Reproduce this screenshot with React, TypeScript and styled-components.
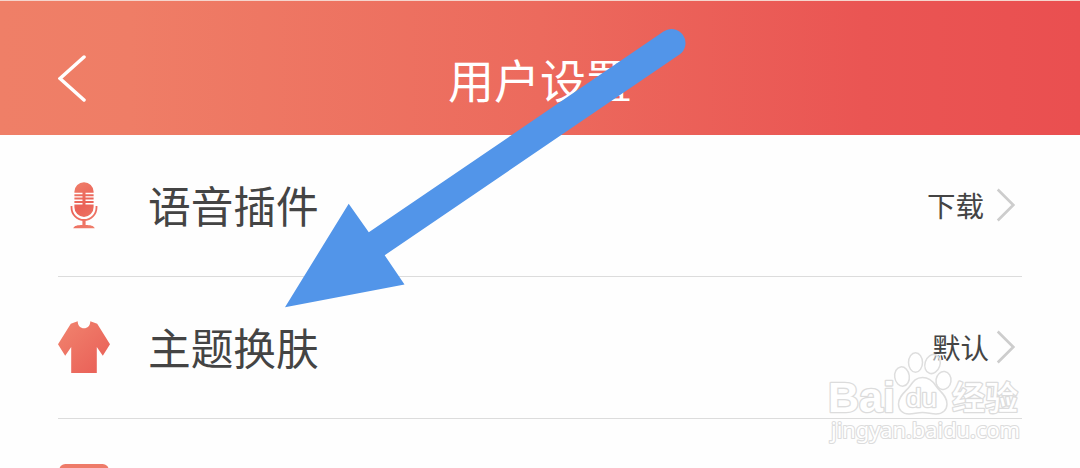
import React from 'react';
import styled, { createGlobalStyle } from 'styled-components';

const GlobalStyle = createGlobalStyle`
  body {
    margin: 0;
    overflow: hidden;
    background: #fefefe;
    font-family: 'Noto Sans CJK SC', 'Noto Sans', sans-serif;
  }
`;

const Screen = styled.div`
  position: relative;
  width: 1080px;
  height: 468px;
  overflow: hidden;
  background: #fefefe;
`;

const Header = styled.header`
  display: grid;
  grid-template-columns: 58px 120px 1fr 178px;
  align-items: center;
  box-sizing: border-box;
  height: 135px;
  padding-top: 22px;
  border-top: 1px solid #f5d5cd;
  background: linear-gradient(to right, #ef7f67 0%, #ef7d66 12%, #ec6a5d 50%, #ea5553 80%, #ea4f50 100%);
  background-clip: padding-box;
`;

const BackButton = styled.button`
  grid-column: 2;
  display: flex;
  width: 30px;
  padding: 0;
  border: none;
  background: none;
  cursor: pointer;
`;

const Title = styled.h1`
  margin: 0 0 2px;
  text-align: center;
  font-size: 46px;
  font-weight: 400;
  line-height: 56px;
  color: #fff;
`;

const List = styled.main`
  display: flex;
  flex-direction: column;
  padding: 0 58px;
`;

const Row = styled.div`
  display: flex;
  align-items: center;
  flex-shrink: 0;
  box-sizing: border-box;
  height: 142px;
  border-bottom: 1px solid #dcdcdc;
`;

const IconSlot = styled.div`
  display: flex;
  width: 90px;
  height: 52px;
  padding-bottom: 1px;
`;

const Label = styled.span`
  flex: 1;
  padding-bottom: 3px;
  font-size: 42.7px;
  line-height: 60px;
  color: #444;
`;

const Value = styled.span<{ $gap: number }>`
  margin-right: ${({ $gap }) => $gap}px;
  padding-bottom: 1px;
  font-size: 28.5px;
  line-height: 40px;
  color: #444;
`;

const Chevron = styled.svg`
  margin-right: 6px;
  margin-top: -1px;
`;

const ArrowOverlay = styled.svg`
  position: absolute;
  top: 0;
  left: 0;
  pointer-events: none;
`;

const Watermark = styled.svg`
  position: absolute;
  top: 345px;
  left: 820px;
  pointer-events: none;
  text {
    font-family: 'Liberation Sans', 'Noto Sans CJK SC', sans-serif;
    paint-order: stroke;
  }
`;

const MarkUrl = styled.text`
  && {
    font-family: 'Noto Sans', sans-serif;
  }
`;

const MicIcon = () => (
  <svg width="52" height="52" viewBox="0 0 52 52" fill="none">
    <defs>
      <linearGradient id="mic" x1="12" y1="3" x2="40" y2="49" gradientUnits="userSpaceOnUse">
        <stop stopColor="#f0826c" />
        <stop offset=".5" stopColor="#ea6258" />
        <stop offset="1" stopColor="#f0806c" />
      </linearGradient>
    </defs>
    <path d="M16.400 12.800a9.600 9.600 0 0 1 19.200 0v15.500a9.600 9.600 0 0 1-19.200 0z" fill="url(#mic)" />
    <path d="M16 14.500h8.500M27.500 14.500H36M16 17.900h8.500M27.500 17.900H36M16 21.300h8.500M27.500 21.300H36M16 24.700h8.500M27.500 24.700H36" stroke="#fff" strokeWidth="1.400" />
    <path d="M13.500 27v1.500a12.500 12.500 0 0 0 25 0V27" stroke="url(#mic)" strokeWidth="1.800" />
    <path d="M24.400 41h3.200v4.900c4.500 0 8.300.700 9.200 3.300H15.200c.9-2.600 4.700-3.300 9.200-3.300z" fill="url(#mic)" />
  </svg>
);

const ShirtIcon = () => (
  <svg width="52" height="52" viewBox="0 0 52 52">
    <defs>
      <linearGradient id="shirt" x1="8" y1="4" x2="43" y2="42" gradientUnits="userSpaceOnUse">
        <stop stopColor="#f0806c" />
        <stop offset="1" stopColor="#ea645a" />
      </linearGradient>
    </defs>
    <path
      d="M12.800 2.800 19.700.2c0 4.300 2.800 7.100 6.300 7.100s6.300-2.800 6.300-7.100l6.900 2.600L52 23.200 44.800 34.800 38.800 26v26H13.200V26l-6 8.800L0 23.200z"
      fill="url(#shirt)"
    />
  </svg>
);

const CardIcon = () => (
  <svg width="52" height="52" viewBox="0 0 52 52">
    <rect x="1.300" y="1" width="49.400" height="50" rx="6" fill="#ee7b69" />
  </svg>
);

interface SettingRowProps {
  icon: React.ReactNode;
  label?: string;
  value?: string;
  gap?: number;
}

const SettingRow: React.FC<SettingRowProps> = ({ icon, label, value, gap = 12 }) => (
  <Row>
    <IconSlot>{icon}</IconSlot>
    {label && <Label>{label}</Label>}
    {value && (
      <>
        <Value $gap={gap}>{value}</Value>
        <Chevron width="20" height="34" viewBox="0 0 20 34" fill="none">
          <path d="M2.700 2.500 17.300 17 2.700 31.500" stroke="#cdcdcd" strokeWidth="2.700" strokeLinecap="square" />
        </Chevron>
      </>
    )}
  </Row>
);

const App: React.FC = () => (
  <>
    <GlobalStyle />
    <Screen>
      <Header>
        <BackButton aria-label="返回">
          <svg width="30" height="48" viewBox="0 0 30 48" fill="none">
            <path d="M26 2 2 23.500 26 45" stroke="#fff" strokeWidth="3.500" strokeLinecap="round" />
          </svg>
        </BackButton>
        <Title>用户设置</Title>
      </Header>
      <List>
        <SettingRow icon={<MicIcon />} label="语音插件" value="下载" gap={12} />
        <SettingRow icon={<ShirtIcon />} label="主题换肤" value="默认" gap={7} />
        <SettingRow icon={<CardIcon />} />
      </List>

      <Watermark width="220" height="110" viewBox="820 345 220 110">
        <g fill="#fff" fillOpacity=".5" stroke="#dedede" strokeWidth="1.500">
          <ellipse cx="902" cy="376.500" rx="7.300" ry="9.700" transform="rotate(-8 902 376.500)" />
          <ellipse cx="915.500" cy="362.500" rx="7" ry="9.800" />
          <ellipse cx="932.500" cy="364" rx="7.500" ry="9.800" transform="rotate(18 932.500 364)" />
          <ellipse cx="943.500" cy="380.500" rx="7.500" ry="9" transform="rotate(8 943.500 380.500)" />
          <path d="M922.500 377.500c6.500 0 10 3 13.500 8.500 3.500 5.500 11 9 11 18 0 6-4.500 10-11 10-5 0-8-1.500-13.500-1.500s-8.500 1.500-13.500 1.500c-6.500 0-10.500-4-10.500-10 0-8.500 7.500-12.500 11.500-18 3.500-5 6-8.500 12.500-8.500z" />
        </g>
        <g fill="#fff" stroke="#dcdcdc" strokeWidth="2.600" strokeLinejoin="round" fontWeight="700">
          <text x="828" y="411.500" fontSize="42" textLength="67" lengthAdjust="spacingAndGlyphs">Bai</text>
          <text x="906" y="407" fontSize="26" fontWeight="400" textLength="31" lengthAdjust="spacingAndGlyphs">du</text>
          <text x="952" y="410" fontSize="33" fontWeight="500" textLength="66" lengthAdjust="spacingAndGlyphs">经验</text>
          <MarkUrl x="831" y="438" fontSize="22" fontWeight="400" strokeWidth="2.200" textLength="189" lengthAdjust="spacingAndGlyphs">jingyan.baidu.com</MarkUrl>
        </g>
      </Watermark>

      <ArrowOverlay width="1080" height="468" viewBox="0 0 1080 468">
        <path
          d="M285 307.300 348.700 203.700 368.800 232.300 663.500 31.600A14 14 0 0 1 679.500 54.600L384.700 255.200 404.500 284.500z"
          fill="#5295e9"
        />
      </ArrowOverlay>
    </Screen>
  </>
);

export default App;
